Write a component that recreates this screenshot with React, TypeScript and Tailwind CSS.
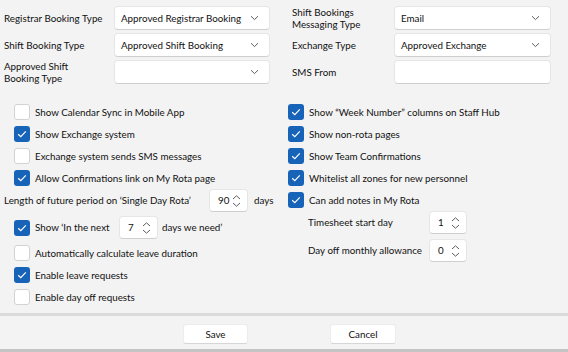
import React from 'react'

const font = { fontFamily: 'Lato, "Noto Sans", sans-serif' }

function Chevron() {
  return (
    <svg width="9" height="6" viewBox="0 0 9 6" className="text-[#5c5c5c]">
      <path d="M1 1.2 L4.5 4.6 L8 1.2" fill="none" stroke="currentColor" strokeWidth="1" />
    </svg>
  )
}

function Select({ value }: { value?: string }) {
  return (
    <div className="h-[24px] flex items-center justify-between pl-[6px] pr-[10px] bg-white rounded-[4px] border border-[#e6e6e6] border-b-[#cfcfcf]">
      <span className="whitespace-nowrap">{value}</span>
      <Chevron />
    </div>
  )
}

function Input() {
  return <div className="h-[24px] bg-white rounded-[4px] border border-[#e6e6e6] border-b-[#cfcfcf]" />
}

function Check({ checked }: { checked?: boolean }) {
  return checked ? (
    <span className="w-[16px] h-[16px] shrink-0 rounded-[3px] bg-[#1763b8] flex items-center justify-center">
      <svg width="10" height="8" viewBox="0 0 10 8">
        <path d="M1.2 4.2 L3.8 6.6 L8.8 1.4" fill="none" stroke="white" strokeWidth="1.2" />
      </svg>
    </span>
  ) : (
    <span className="w-[16px] h-[16px] shrink-0 rounded-[3px] bg-white border border-[#d2d2d2]" />
  )
}

function CheckRow({ checked, label }: { checked?: boolean; label: string }) {
  return (
    <div className="h-[22px] flex items-center gap-[5px]">
      <Check checked={checked} />
      <span className="whitespace-nowrap">{label}</span>
    </div>
  )
}

function Spin({ value, w = 'w-[38px]' }: { value: string; w?: string }) {
  return (
    <div className={`${w} h-[23px] shrink-0 flex items-center justify-between pl-[8px] pr-[6px] bg-white rounded-[4px] border border-[#e6e6e6] border-b-[#cfcfcf]`}>
      <span>{value}</span>
      <svg width="9" height="14" viewBox="0 0 9 14" className="text-[#5c5c5c]">
        <path d="M1 5 L4.5 1.8 L8 5" fill="none" stroke="currentColor" strokeWidth="1" />
        <path d="M1 9 L4.5 12.2 L8 9" fill="none" stroke="currentColor" strokeWidth="1" />
      </svg>
    </div>
  )
}

export default function App() {
  return (
    <div style={font} className="w-[568px] h-[352px] bg-[#f3f3f3] text-[9.8px] text-[#111111] flex flex-col overflow-hidden">
      {/* dropdown fields */}
      <div className="grid grid-cols-[110px_156px_22px_102px_157px] grid-rows-[24px_24px_24px] gap-y-[3px] pt-[6px] pl-[4px] items-center leading-[12px]">
        <span className="whitespace-nowrap">Registrar Booking Type</span>
        <Select value="Approved Registrar Booking" />
        <span />
        <span>Shift Bookings<br />Messaging Type</span>
        <Select value="Email" />

        <span>Shift Booking Type</span>
        <Select value="Approved Shift Booking" />
        <span />
        <span>Exchange Type</span>
        <Select value="Approved Exchange" />

        <span>Approved Shift<br />Booking Type</span>
        <Select />
        <span />
        <span>SMS From</span>
        <Input />
      </div>

      {/* options */}
      <div className="flex pt-[17px] h-[229px]">
        <div className="w-[284px] flex flex-col">
          <div className="pl-[14px] flex flex-col">
            <CheckRow label="Show Calendar Sync in Mobile App" />
            <CheckRow checked label="Show Exchange system" />
            <CheckRow label="Exchange system sends SMS messages" />
            <CheckRow checked label="Allow Confirmations link on My Rota page" />
          </div>
          <div className="h-[23px] flex items-center pl-[4px]">
            <span className="w-[205px] whitespace-nowrap">Length of future period on ‘Single Day Rota’</span>
            <Spin value="90" w="w-[39px]" />
            <span className="ml-[6px]">days</span>
          </div>
          <div className="pl-[14px] flex flex-col pt-[4px]">
            <div className="h-[23px] flex items-center gap-[5px]">
              <Check checked />
              <span className="w-[79px] whitespace-nowrap">Show ‘In the next</span>
              <Spin value="7" w="w-[39px]" />
              <span className="ml-[-1px] whitespace-nowrap">days we need’</span>
            </div>
            <div className="pt-[3px] flex flex-col">
              <CheckRow label="Automatically calculate leave duration" />
              <CheckRow checked label="Enable leave requests" />
              <CheckRow label="Enable day off requests" />
            </div>
          </div>
        </div>
        <div className="flex-1 flex flex-col pl-[4px]">
          <CheckRow checked label="Show “Week Number” columns on Staff Hub" />
          <CheckRow checked label="Show non-rota pages" />
          <CheckRow checked label="Show Team Confirmations" />
          <CheckRow checked label="Whitelist all zones for new personnel" />
          <CheckRow checked label="Can add notes in My Rota" />
          <div className="flex flex-col gap-[5px] pl-[20px]">
            <div className="h-[23px] flex items-center">
              <span className="w-[121px] whitespace-nowrap">Timesheet start day</span>
              <Spin value="1" />
            </div>
            <div className="h-[23px] flex items-center">
              <span className="w-[121px] whitespace-nowrap">Day off monthly allowance</span>
              <Spin value="0" />
            </div>
          </div>
        </div>
      </div>

      {/* footer */}
      <div className="h-[3px] bg-[#dadada]" />
      <div className="flex-1 flex justify-center items-start pt-[8px] gap-[82px] pl-[11px]">
        <button className="w-[65px] h-[20px] bg-white rounded-[3px] border border-[#ececec] border-b-[#d6d6d6]">Save</button>
        <button className="w-[66px] h-[20px] bg-white rounded-[3px] border border-[#ececec] border-b-[#d6d6d6]">Cancel</button>
      </div>
      <div className="h-[3px] bg-[#c4c4c4]" />
    </div>
  )
}
